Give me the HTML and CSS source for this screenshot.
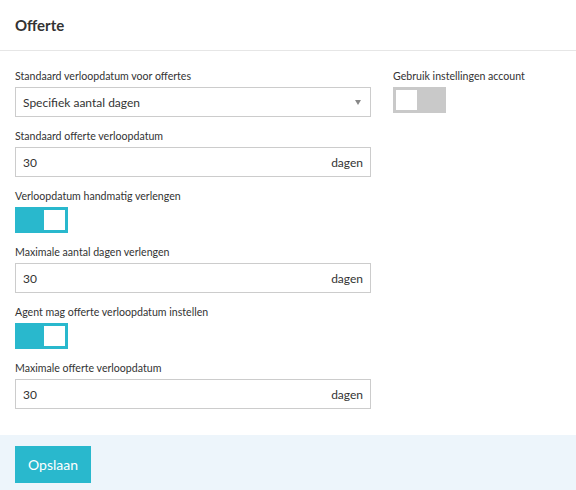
FILE: index.html
```html
<!DOCTYPE html>
<html lang="nl">
<head>
<meta charset="utf-8">
<title>Offerte</title>
<link rel="stylesheet" href="styles.css">
</head>
<body>
<div class="panel">
  <header class="panel-head">
    <h1 class="title">Offerte</h1>
  </header>
  <div class="panel-body">
    <div class="col-main">
      <div class="group">
        <label class="label">Standaard verloopdatum voor offertes</label>
        <div class="select">
          <span>Specifiek aantal dagen</span>
          <span class="caret"></span>
        </div>
      </div>
      <div class="group">
        <label class="label">Standaard offerte verloopdatum</label>
        <div class="input"><span>30</span><span class="unit">dagen</span></div>
      </div>
      <div class="group">
        <label class="label">Verloopdatum handmatig verlengen</label>
        <div class="toggle on"><span class="knob"></span></div>
      </div>
      <div class="group">
        <label class="label">Maximale aantal dagen verlengen</label>
        <div class="input"><span>30</span><span class="unit">dagen</span></div>
      </div>
      <div class="group">
        <label class="label">Agent mag offerte verloopdatum instellen</label>
        <div class="toggle on"><span class="knob"></span></div>
      </div>
      <div class="group">
        <label class="label">Maximale offerte verloopdatum</label>
        <div class="input"><span>30</span><span class="unit">dagen</span></div>
      </div>
    </div>
    <div class="col-side">
      <div class="group">
        <label class="label">Gebruik instellingen account</label>
        <div class="toggle off"><span class="knob"></span></div>
      </div>
    </div>
  </div>
  <footer class="panel-foot">
    <button class="btn">Opslaan</button>
  </footer>
</div>
</body>
</html>
```

FILE: styles.css
```css
* { box-sizing: border-box; }
html, body { margin: 0; padding: 0; background: #fff; }
body {
  font-family: Lato, "Open Sans", sans-serif;
  color: #333;
  height: 490px;
  overflow: hidden;
}
.panel { display: flex; flex-direction: column; height: 490px; }
.panel-head {
  flex: 0 0 51px;
  height: 51px;
  border-bottom: 1px solid #e6e6e6;
  padding: 0 15px;
  display: flex;
  align-items: center;
}
.title {
  margin: 0;
  font-size: 15px;
  font-weight: 700;
  color: #333;
}
.panel-body {
  flex: 0 0 auto;
  display: grid;
  grid-template-columns: 356px 1fr;
  column-gap: 22px;
  align-items: start;
  padding: 18px 15px 14px;
}
.group { display: flex; flex-direction: column; margin-bottom: 12px; }
.label {
  font-size: 10.6px;
  line-height: 15px;
  margin-bottom: 3px;
  color: #333;
}
.select, .input {
  height: 30px;
  border: 1px solid #ccc;
  display: flex;
  align-items: center;
  justify-content: space-between;
  padding: 0 7px 0 7px;
  font-size: 12px;
  color: #333;
  background: #fff;
}
.caret {
  width: 0; height: 0;
  border-left: 3.5px solid transparent;
  border-right: 3.5px solid transparent;
  border-top: 5px solid #888;
  margin-right: 2px;
}
.toggle {
  width: 53px;
  height: 26px;
  padding: 3px;
  display: flex;
}
.toggle .knob { width: 21px; height: 20px; background: #fff; }
.toggle.on { background: #29b8cd; justify-content: flex-end; }
.toggle.off { background: #c9c9c9; justify-content: flex-start; }
.panel-foot {
  flex: 1 0 auto;
  background: #edf5fb;
  padding: 11px 15px;
}
.btn {
  width: 76px;
  height: 37px;
  border: none;
  background: #29b8cd;
  color: #fff;
  font-family: Lato, sans-serif;
  font-size: 14px;
  padding: 0;
}
```
